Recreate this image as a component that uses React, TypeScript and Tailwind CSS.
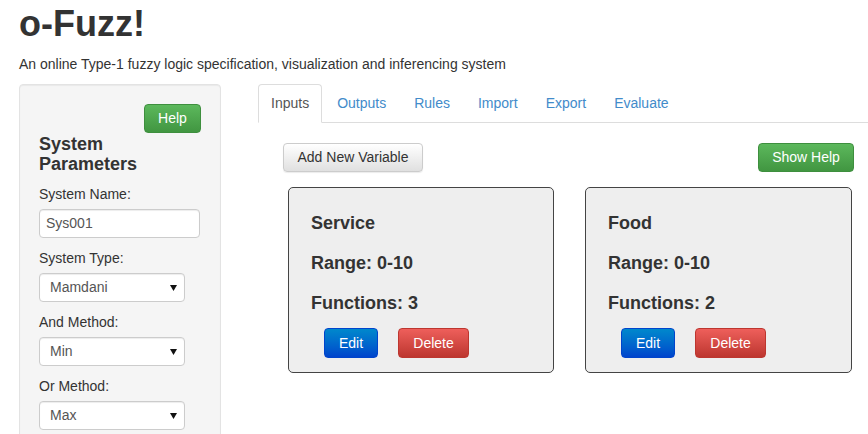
import React from 'react';

const tabs = ['Inputs', 'Outputs', 'Rules', 'Import', 'Export', 'Evaluate'];

const variables = [
  { name: 'Service', range: '0-10', functions: 3, width: 'w-[266px]' },
  { name: 'Food', range: '0-10', functions: 2, width: 'w-[267px]' },
];

const Field: React.FC<{ label: string; children: React.ReactNode }> = ({ label, children }) => (
  <div className="mb-[10px]">
    <div className="text-[14px] leading-[20px] mb-[5px] text-[#333]">{label}</div>
    {children}
  </div>
);

const Select: React.FC<{ value: string }> = ({ value }) => (
  <div className="w-[146px] h-[29px] flex items-center justify-between bg-white border border-[#ccc] rounded-[4px] pl-[10px] pr-[7px] text-[14px] text-[#555] shadow-[inset_0_1px_1px_rgba(0,0,0,0.075)]">
    <span>{value}</span>
    <svg width="7" height="6" viewBox="0 0 7 6">
      <polygon points="0,0 7,0 3.5,6" fill="#111" />
    </svg>
  </div>
);

const App: React.FC = () => {
  return (
    <div className="h-[434px] overflow-hidden bg-white pl-[19px] text-[#333]" style={{ fontFamily: '"Liberation Sans", Arial, sans-serif' }}>
      {/* Header */}
      <h1 className="pt-[4px] text-[36px] leading-[40px] font-bold">o-Fuzz!</h1>
      <p className="mt-[10px] text-[14px] leading-[20px]">
        An online Type-1 fuzzy logic specification, visualization and inferencing system
      </p>

      <div className="flex mt-[10px]">
        {/* Sidebar */}
        <div className="w-[202px] shrink-0 bg-[#f5f5f5] border border-[#e3e3e3] rounded-[4px] p-[19px] shadow-[inset_0_1px_1px_rgba(0,0,0,0.05)]">
          <div className="flex justify-end">
            <button className="w-[57px] h-[29px] rounded-[4px] border border-[#3e8f3e] bg-linear-to-b from-[#5cb85c] to-[#419641] text-white text-[14px]">
              Help
            </button>
          </div>
          <h3 className="mt-[1px] text-[18px] leading-[20px] font-bold">
            System
            <br />
            Parameters
          </h3>
          <div className="mt-[10px]">
            <Field label="System Name:">
              <div className="w-[161px] h-[29px] flex items-center bg-white border border-[#ccc] rounded-[4px] pl-[6px] text-[14px] text-[#555] shadow-[inset_0_1px_1px_rgba(0,0,0,0.075)]">
                Sys001
              </div>
            </Field>
            <Field label="System Type:">
              <Select value="Mamdani" />
            </Field>
            <Field label="And Method:">
              <Select value="Min" />
            </Field>
            <Field label="Or Method:">
              <Select value="Max" />
            </Field>
          </div>
        </div>

        {/* Main */}
        <div className="flex-1 ml-[37px]">
          <ul className="flex border-b border-[#ddd] text-[14px] leading-[20px]">
            {tabs.map((t, i) => (
              <li
                key={t}
                className={
                  i === 0
                    ? 'mr-[2px] -mb-px px-[12px] py-[8px] border border-[#ddd] border-b-white rounded-t-[4px] bg-white text-[#555]'
                    : 'mr-[2px] px-[12px] py-[8px] border border-transparent text-[#428bca]'
                }
              >
                {t}
              </li>
            ))}
          </ul>

          <div className="flex justify-between mt-[20px] pl-[25px] pr-[14px]">
            <button className="w-[140px] h-[29px] rounded-[4px] border border-[#ccc] bg-linear-to-b from-white to-[#e0e0e0] text-[#333] text-[14px] shadow-[0_1px_1px_rgba(0,0,0,0.08)]">
              Add New Variable
            </button>
            <button className="w-[96px] h-[29px] rounded-[4px] border border-[#3e8f3e] bg-linear-to-b from-[#5cb85c] to-[#419641] text-white text-[14px]">
              Show Help
            </button>
          </div>

          <div className="flex gap-[31px] mt-[15px] pl-[30px]">
            {variables.map((v) => (
              <div
                key={v.name}
                className={`${v.width} h-[186px] bg-[#eee] border border-[#444] rounded-[5px] pl-[22px] pt-[25px]`}
              >
                <div className="text-[18px] leading-[20px] font-bold">{v.name}</div>
                <div className="mt-[20px] text-[18px] leading-[20px] font-bold">Range: {v.range}</div>
                <div className="mt-[20px] text-[18px] leading-[20px] font-bold">Functions: {v.functions}</div>
                <div className="flex gap-[20px] mt-[15px] pl-[13px]">
                  <button className="w-[54px] h-[30px] rounded-[4px] border border-[#0044cc] bg-linear-to-b from-[#0088cc] to-[#0044cc] text-white text-[14px]">
                    Edit
                  </button>
                  <button className="w-[71px] h-[30px] rounded-[4px] border border-[#bd362f] bg-linear-to-b from-[#ee5f5b] to-[#bd362f] text-white text-[14px]">
                    Delete
                  </button>
                </div>
              </div>
            ))}
          </div>
        </div>
      </div>
    </div>
  );
};

export default App;
